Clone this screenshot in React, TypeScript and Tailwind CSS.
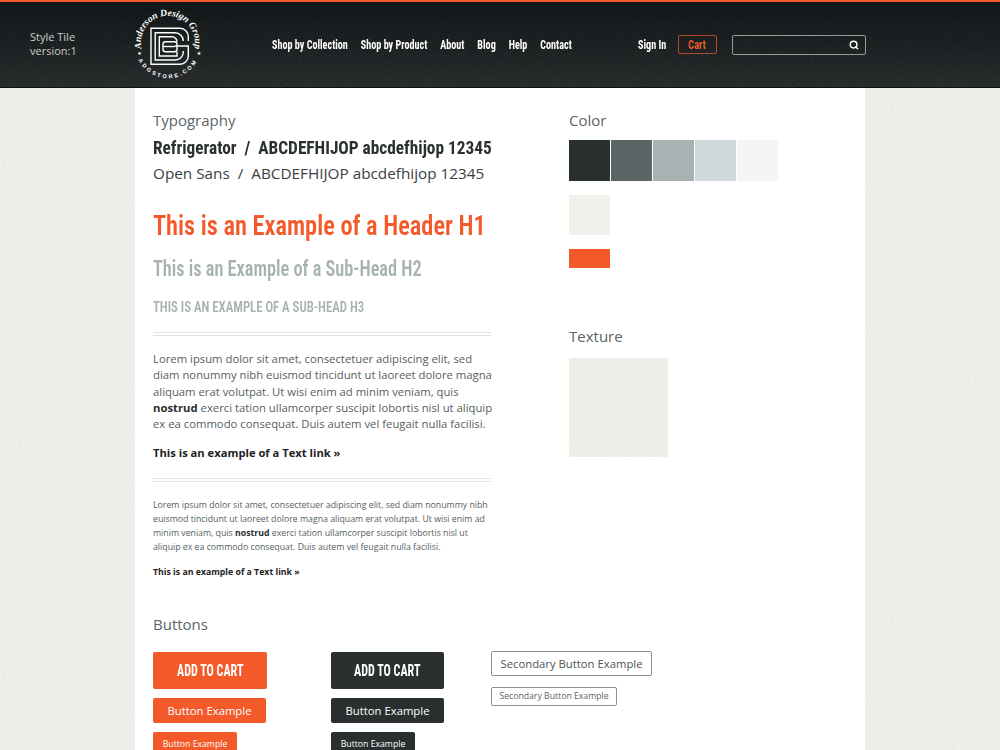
import React from "react";
import { Search } from "lucide-react";

const cond = "font-['Roboto','Liberation_Sans_Narrow',sans-serif] [font-stretch:75%]";
const open = "font-['Open_Sans',sans-serif]";

const navLinks = ["Shop by Collection", "Shop by Product", "About", "Blog", "Help", "Contact"];
const greys = ["bg-[#2a2f30]", "bg-[#5a6566]", "bg-[#a6b3b2]", "bg-[#cfd8da]", "bg-[#f3f5f6]"];

const Paper = ({ id, dark }: { id: string; dark?: boolean }) => (
  <svg className="absolute inset-0 w-full h-full">
    <filter id={id}>
      <feTurbulence type="fractalNoise" baseFrequency="0.5" numOctaves="4" seed="4" />
      {dark ? (
        <feColorMatrix values="0 0 0 0 0 0 0 0 0 0 0 0 0 0 0 0.4 0 0 0 -0.12" />
      ) : (
        <feColorMatrix values="0 0 0 0 0.6 0 0 0 0 0.59 0 0 0 0 0.55 0.4 0 0 0 -0.12" />
      )}
    </filter>
    <rect width="100%" height="100%" filter={`url(#${id})`} />
  </svg>
);

const Logo = () => (
  <svg width="80" height="80" viewBox="128 5 80 80" fill="none" className="shrink-0">
    <defs>
      <path id="logoTop" d="M 142 50 A 27 27 0 1 1 194 50" />
      <path id="logoBottom" d="M 139 61 A 33 33 0 0 0 197 61" />
    </defs>
    <g stroke="#fff" strokeWidth="1.4">
      <path d="M188.3 41 V36.6 A8.3 8.3 0 0 0 180 28.3 H151 V64.3 H180 A8.3 8.3 0 0 0 188.3 56 V46 H175" />
      <path d="M183.3 41 A8.3 8.3 0 0 0 175 32.7 H155.2 V60 H175 A8 8 0 0 0 183.3 52 V51" />
      <path d="M177 41.7 A5 5 0 0 0 172 36.7 H159.3 V56 H177 V51.7" />
      <rect x="163" y="41.7" width="14" height="10" rx="2.5" />
      <path d="M163 46.5 H175" />
    </g>
    <text fill="#fff" fontSize="9.6" fontWeight="700" fontStyle="italic" fontFamily="'Liberation Serif', serif">
      <textPath href="#logoTop" startOffset="50%" textAnchor="middle">Anderson Design Group</textPath>
    </text>
    <text fill="#fff" fontSize="5.6" fontWeight="700" letterSpacing="2.2" fontFamily="'Liberation Sans', sans-serif">
      <textPath href="#logoBottom" startOffset="50%" textAnchor="middle">ADGSTORE.COM</textPath>
    </text>
    <text x="139.5" y="55" fill="#fff" fontSize="5" textAnchor="middle" fontFamily="'DejaVu Sans', sans-serif">★</text>
    <text x="199" y="54.5" fill="#fff" fontSize="5" textAnchor="middle" fontFamily="'DejaVu Sans', sans-serif">★</text>
  </svg>
);

const Rule = () => (
  <div className="border-y border-[#dfe4e4] h-[4px]" />
);

const Btn = ({ cls, children }: { cls: string; children: React.ReactNode }) => (
  <div className={`flex items-center justify-center rounded-[2px] text-white ${cls}`}>{children}</div>
);

export default function App() {
  return (
    <div className={`relative h-[750px] overflow-hidden bg-[#f1f0eb] ${open}`}>
      <Paper id="pagePaper" />
      <header className="relative h-[88px] flex items-center border-t-2 border-[#f4592a] border-b border-b-[#111] bg-gradient-to-b from-[#14181a] to-[#2c3031]">
        <Paper id="headerGrain" dark />
        <div className="relative w-[128px] pl-[30px] pb-[2px] text-[11px] leading-[14px] text-[#c8cccc]">
          <div>Style Tile</div>
          <div>version:1</div>
        </div>
        <div className="relative flex items-center">
          <Logo />
          <nav className={`ml-[64px] w-[299px] text-[13px] font-bold text-white ${cond}`}>
            <div className="flex gap-[16.6px] whitespace-nowrap origin-left scale-x-[.78]">
              {navLinks.map((l) => (
                <span key={l}>{l}</span>
              ))}
            </div>
          </nav>
          <div className={`ml-[67px] w-[28px] text-[13px] font-bold text-white whitespace-nowrap ${cond}`}>
            <div className="origin-left scale-x-[.78]">Sign In</div>
          </div>
          <div className={`ml-[12px] w-[39px] h-[19px] flex items-center justify-center rounded-[2px] border border-[#b04a2a] text-[13px] font-bold text-[#f4592a] ${cond}`}>
            <span className="scale-x-[.8]">Cart</span>
          </div>
          <div className="ml-[15px] w-[134px] h-[20px] flex items-center justify-end pr-[6px] rounded-[2px] border border-[#999]">
            <Search size={10} strokeWidth={3.5} color="#fff" />
          </div>
        </div>
      </header>

      <main className="relative mx-[135px] h-[662px] bg-white pl-[18px] pt-[22px]">
        <div className="flex gap-[78px]">
          <section className="w-[338px]">
            <h2 className="text-[15px] leading-[20px] text-[#5a6566]">Typography</h2>
            <p className={`mt-[7px] text-[19px] leading-[22px] font-bold text-[#2a2f30] whitespace-nowrap origin-left scale-x-[.91] ${cond}`}>
              Refrigerator&nbsp; /&nbsp; ABCDEFHIJOP abcdefhijop 12345
            </p>
            <p className="mt-[4px] text-[15.3px] leading-[20px] text-[#3a4041] whitespace-nowrap">
              Open Sans&nbsp; /&nbsp; ABCDEFHIJOP abcdefhijop 12345
            </p>
            <h1 className={`mt-[26px] text-[28px] leading-[34px] font-semibold text-[#f4592a] whitespace-nowrap origin-left scale-x-[.87] ${cond}`}>
              This is an Example of a Header H1
            </h1>
            <h2 className={`mt-[13px] text-[22px] leading-[26px] font-semibold text-[#a6b3b2] whitespace-nowrap origin-left scale-x-[.83] ${cond}`}>
              This is an Example of a Sub-Head H2
            </h2>
            <h3 className={`mt-[15px] text-[15px] leading-[20px] font-semibold uppercase text-[#a6b3b2] whitespace-nowrap origin-left scale-x-[.85] ${cond}`}>
              This is an Example of a Sub-Head H3
            </h3>
            <div className="mt-[15px]"><Rule /></div>
            <p className="mt-[15px] text-[11.3px] leading-[16.3px] text-[#555e5f] whitespace-nowrap">
              Lorem ipsum dolor sit amet, consectetuer adipiscing elit, sed<br />
              diam nonummy nibh euismod tincidunt ut laoreet dolore magna<br />
              aliquam erat volutpat. Ut wisi enim ad minim veniam, quis<br />
              <b className="text-[#2a2f30]">nostrud</b> exerci tation ullamcorper suscipit lobortis nisl ut aliquip<br />
              ex ea commodo consequat. Duis autem vel feugait nulla facilisi.
            </p>
            <p className="mt-[13px] text-[11.2px] leading-[16px] font-bold text-[#1d2122]">This is an example of a Text link »</p>
            <div className="mt-[17px]"><Rule /></div>
            <p className="mt-[16px] text-[8.75px] leading-[14px] text-[#555e5f] whitespace-nowrap">
              Lorem ipsum dolor sit amet, consectetuer adipiscing elit, sed diam nonummy nibh<br />
              euismod tincidunt ut laoreet dolore magna aliquam erat volutpat. Ut wisi enim ad<br />
              minim veniam, quis <b className="text-[#2a2f30]">nostrud</b> exerci tation ullamcorper suscipit lobortis nisl ut<br />
              aliquip ex ea commodo consequat. Duis autem vel feugait nulla facilisi.
            </p>
            <p className="mt-[11px] text-[8.75px] leading-[14px] font-bold text-[#1d2122]">This is an example of a Text link »</p>
          </section>

          <section>
            <h2 className="text-[15px] leading-[20px] text-[#5a6566]">Color</h2>
            <div className="mt-[10px] flex gap-[1.5px]">
              {greys.map((g) => (
                <div key={g} className={`w-[40.5px] h-[41px] ${g}`} />
              ))}
            </div>
            <div className="mt-[14px] w-[40.5px] h-[40px] bg-[#f1f0eb]" />
            <div className="mt-[14px] w-[40.5px] h-[19px] bg-[#f4592a]" />
            <h2 className="mt-[58px] text-[15px] leading-[20px] text-[#5a6566]">Texture</h2>
            <div className="relative mt-[12px] w-[99px] h-[99px] bg-[#f1f0eb] overflow-hidden">
              <Paper id="swatchPaper" />
            </div>
          </section>
        </div>

        <h2 className="mt-[35px] text-[15px] leading-[20px] text-[#5a6566]">Buttons</h2>
        <div className="mt-[18px] flex">
          <div className="w-[178px] flex flex-col gap-[9px]">
            <Btn cls={`w-[114px] h-[37px] bg-[#f4592a] text-[16px] font-bold ${cond}`}>
              <span className="scale-x-[.75] whitespace-nowrap">ADD TO CART</span>
            </Btn>
            <Btn cls="w-[113px] h-[25px] bg-[#f4592a] text-[11.3px]">Button Example</Btn>
            <Btn cls="w-[84px] h-[25px] bg-[#f4592a] text-[8.7px] font-medium">Button Example</Btn>
          </div>
          <div className="w-[160px] flex flex-col gap-[9px]">
            <Btn cls={`w-[113px] h-[37px] bg-[#2a2f30] text-[16px] font-bold ${cond}`}>
              <span className="scale-x-[.75] whitespace-nowrap">ADD TO CART</span>
            </Btn>
            <Btn cls="w-[113px] h-[25px] bg-[#2a2f30] text-[11.3px]">Button Example</Btn>
            <Btn cls="w-[84px] h-[25px] bg-[#2a2f30] text-[8.7px] font-medium">Button Example</Btn>
          </div>
          <div className="-mt-[1px] flex flex-col items-start gap-[11px]">
            <div className="w-[161px] h-[25px] flex items-center justify-center rounded-[2px] border border-[#8a9090] text-[11.3px] text-[#4d5556]">
              Secondary Button Example
            </div>
            <div className="w-[126px] h-[19px] flex items-center justify-center rounded-[2px] border border-[#8a9090] text-[8.7px] text-[#5a6566]">
              Secondary Button Example
            </div>
          </div>
        </div>
      </main>
    </div>
  );
}
